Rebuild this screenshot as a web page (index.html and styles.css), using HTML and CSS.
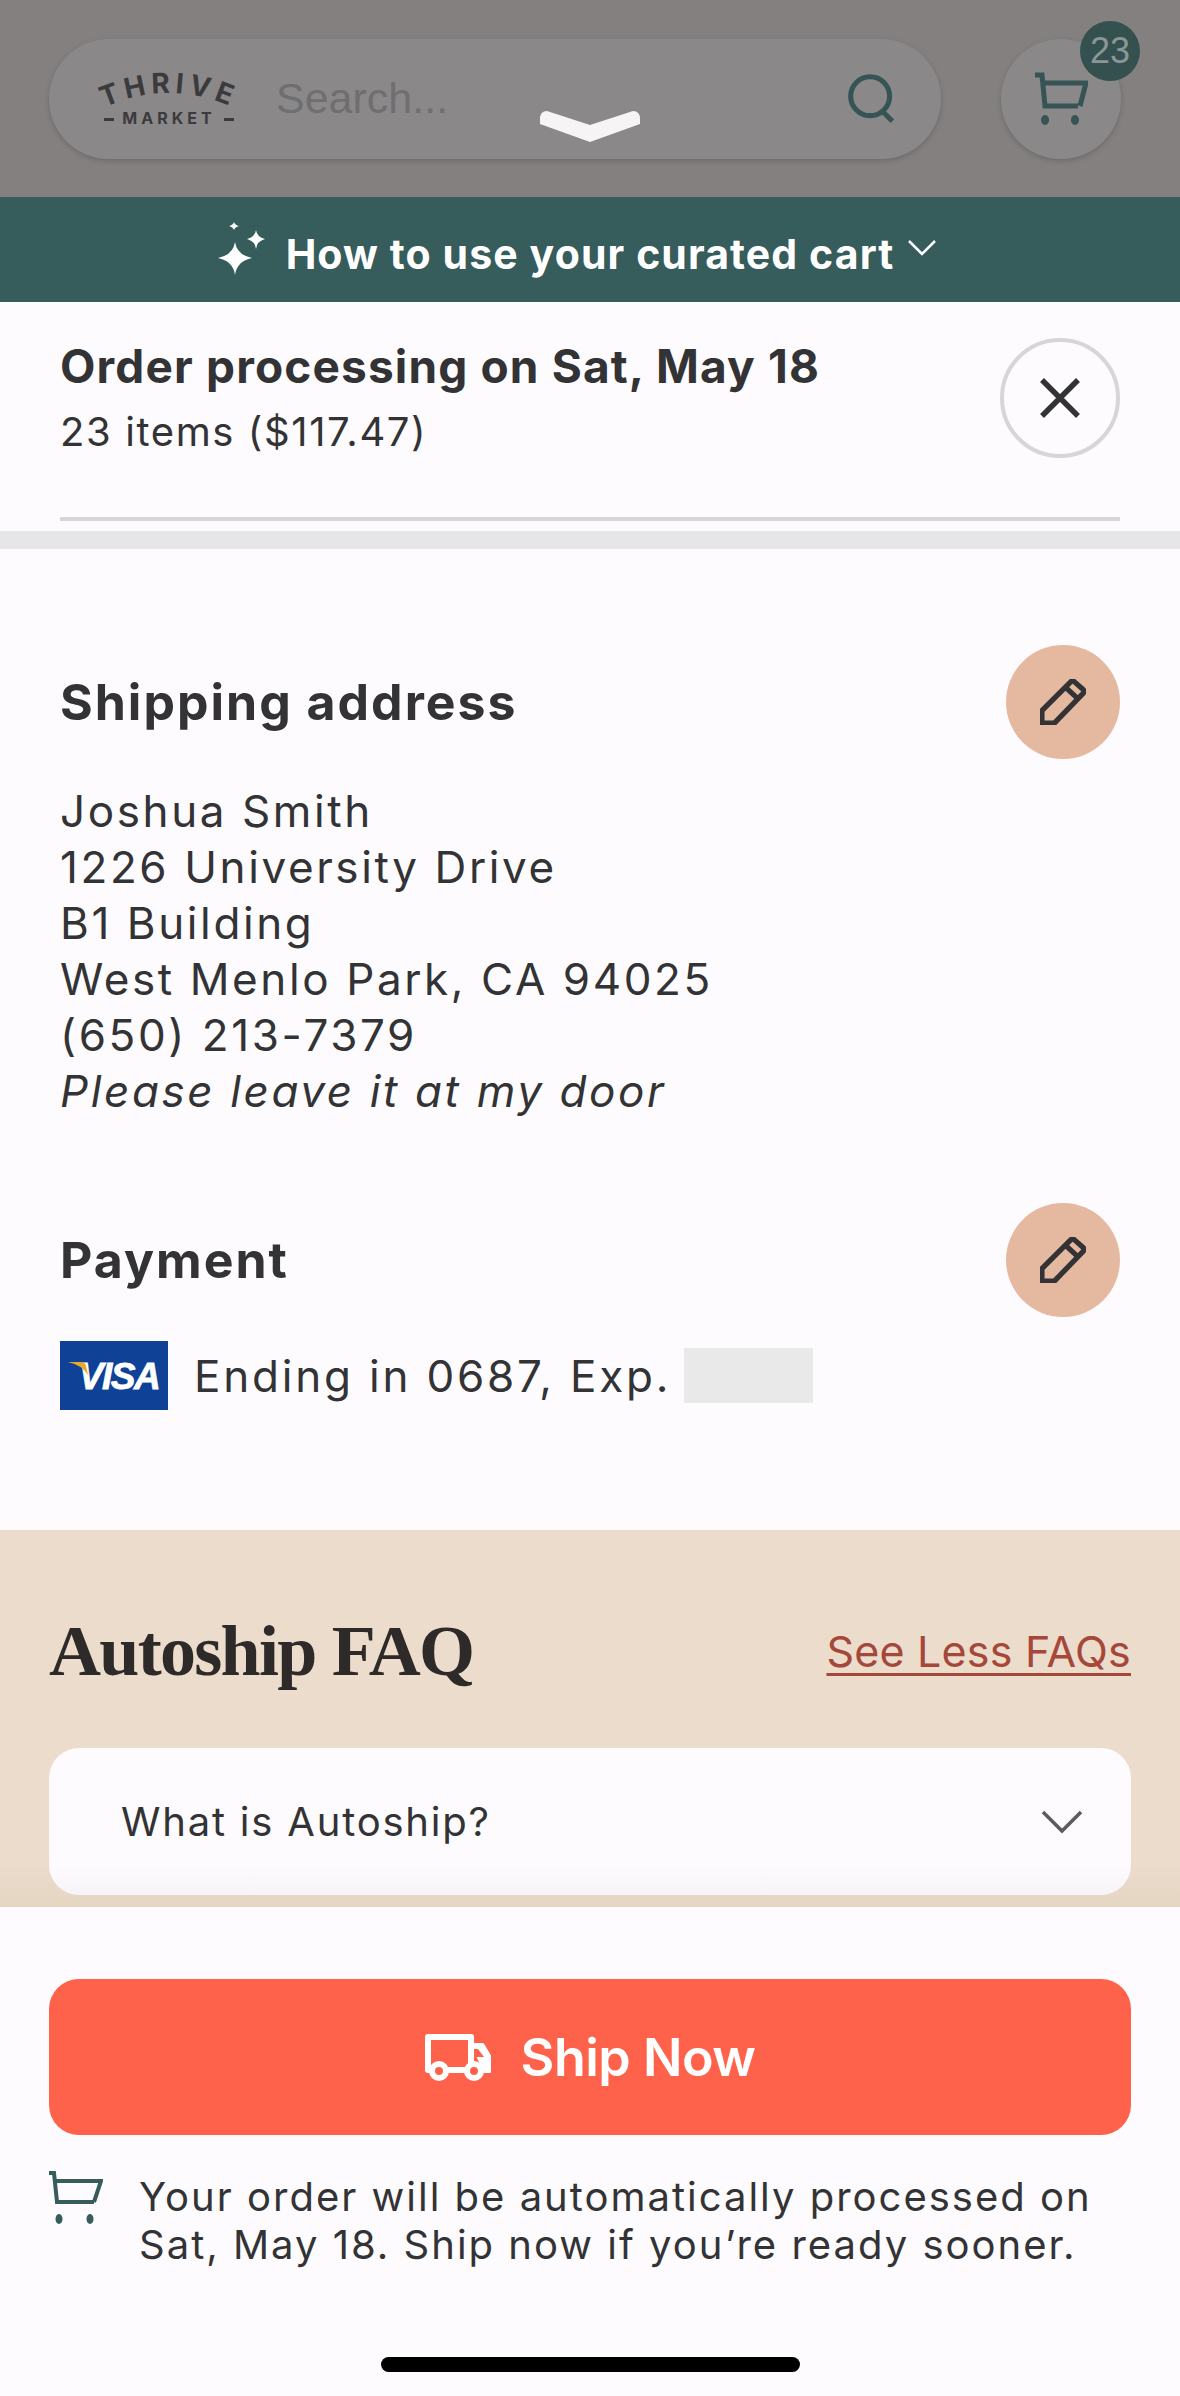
FILE: index.html
```html
<!DOCTYPE html>
<html lang="en">
<head>
  <meta charset="UTF-8" />
  <title>Review order</title>
  <link rel="stylesheet" href="styles.css">
</head>
<body>
  <div class="page">

    <!-- dimmed search header -->
    <div class="top-header">
      <div class="search-pill">
        <svg class="logo" viewBox="0 -10 140 76" width="140" height="76">
          <path id="logo-arc" d="M0 39 Q70 5 140 39" fill="none" />
          <text class="logo-top"><textPath href="#logo-arc" startOffset="50%" text-anchor="middle">THRIVE</textPath></text>
          <text class="logo-bottom" x="70" y="53" text-anchor="middle">MARKET</text>
          <path d="M5 48.500H15M125 48.500H135" stroke="#3b3a3d" stroke-width="3" />
        </svg>
        <span class="search-text">Search...</span>
        <svg class="search-icon" viewBox="0 0 54 54" width="50" height="50" fill="none" stroke="#365454" stroke-width="5.500">
          <circle cx="25" cy="24" r="21" />
          <path d="M38 40l11 11" />
        </svg>
      </div>
      <div class="cart-btn">
        <svg viewBox="0 0 54 54" width="54" height="54" fill="none" stroke="#365454" stroke-width="5">
          <path d="M1 3h7l3 31h33" />
          <path d="M9 11h43l-6 23" />
          <ellipse cx="11" cy="48" rx="4" ry="5" fill="#365454" stroke="none" />
          <ellipse cx="41" cy="48" rx="4" ry="5" fill="#365454" stroke="none" />
        </svg>
        <span class="badge">23</span>
      </div>
    </div>

    <!-- sheet handle -->
    <svg class="handle" viewBox="0 0 100 31" width="100" height="31">
      <path d="M7 0 L50 14 L93 0 Q100 0 100 8 L100 13 L50 31 L0 13 L0 8 Q0 0 7 0Z" fill="#f6f4f5" />
    </svg>

    <!-- curated cart banner -->
    <div class="banner">
      <svg class="sparkle" viewBox="0 0 47 53" width="47" height="53" fill="#fff">
        <path d="M17 20 Q19 33 34 36 Q19 39 17 53 Q15 39 0 36 Q15 33 17 20Z" />
        <path d="M38 8 Q39 15 47 17 Q39 19 38 27 Q37 19 29 17 Q37 15 38 8Z" />
        <path d="M16 0 Q17 3 21 4 Q17 5 16 8 Q15 5 11 4 Q15 3 16 0Z" />
      </svg>
      <span class="banner-text">How to use your curated cart</span>
      <svg class="banner-chev" viewBox="0 0 30 16" width="30" height="16" fill="none" stroke="#fff" stroke-width="2.500">
        <path d="M2 1l13 13L28 1" />
      </svg>
    </div>

    <!-- order summary -->
    <div class="order">
      <div class="order-row">
        <div>
          <div class="order-title">Order processing on Sat, May 18</div>
          <div class="order-sub">23 items ($117.47)</div>
        </div>
        <div class="close-btn">
          <svg viewBox="0 0 40 40" width="40" height="40" fill="none" stroke="#333336" stroke-width="5.500">
            <path d="M2 2l36 36M38 2L2 38" />
          </svg>
        </div>
      </div>
      <div class="order-line"></div>
    </div>
    <div class="gray-bar"></div>

    <!-- address + payment -->
    <div class="details">
      <div class="section-head address-head">
        <h2>Shipping address</h2>
        <div class="edit-btn">
          <svg viewBox="0 0 48 48" width="46" height="46" fill="none" stroke="#333336" stroke-width="5.500" stroke-linejoin="round">
            <path d="M2 46V33L32 3q2-2 4 0l9 8q2 2 0 4L15 46Z" />
            <path d="M27 9l13 12" />
          </svg>
        </div>
      </div>
      <div class="address">
        <div>Joshua Smith</div>
        <div>1226 University Drive</div>
        <div>B1 Building</div>
        <div>West Menlo Park, CA 94025</div>
        <div>(650) 213-7379</div>
        <div class="note">Please leave it at my door</div>
      </div>

      <div class="section-head payment-head">
        <h2>Payment</h2>
        <div class="edit-btn">
          <svg viewBox="0 0 48 48" width="46" height="46" fill="none" stroke="#333336" stroke-width="5.500" stroke-linejoin="round">
            <path d="M2 46V33L32 3q2-2 4 0l9 8q2 2 0 4L15 46Z" />
            <path d="M27 9l13 12" />
          </svg>
        </div>
      </div>
      <div class="payment-row">
        <svg class="visa" viewBox="0 0 108 69" width="108" height="69">
          <rect width="108" height="69" fill="#0f4296" />
          <text x="59" y="48" text-anchor="middle">VISA</text>
          <path d="M8 21h13q4 0 5 4l2 9Q22 24 8 21Z" fill="#e8a82c" />
        </svg>
        <span>Ending in 0687, Exp.</span>
        <span class="redacted"></span>
      </div>
    </div>

    <!-- faq -->
    <div class="faq">
      <div class="faq-head">
        <h2>Autoship FAQ</h2>
        <a class="faq-link">See Less FAQs</a>
      </div>
      <div class="faq-card">
        <span>What is Autoship?</span>
        <svg viewBox="0 0 42 24" width="42" height="24" fill="none" stroke="#5b5b5e" stroke-width="3.500">
          <path d="M2 2l19 19L40 2" />
        </svg>
      </div>
    </div>

    <!-- sticky footer -->
    <div class="footer">
      <div class="ship-btn">
        <svg viewBox="0 0 66 47" width="66" height="47" fill="none" stroke="#fff" stroke-width="6" stroke-linejoin="round">
          <path d="M6 36H3V3h43v33H22" />
          <path d="M46 12h11l7 12v12h-6" fill="#fff" />
          <path d="M49 15h4l6 8H49Z" fill="#ff624b" stroke="none" />
          <circle cx="14" cy="37" r="7" fill="#ff624b" />
          <circle cx="49" cy="37" r="7" fill="#ff624b" />
        </svg>
        <span>Ship Now</span>
      </div>
      <div class="auto-note">
        <svg viewBox="0 0 54 54" width="54" height="54" fill="none" stroke="#365c5c" stroke-width="4">
          <path d="M0 2h5l3 29h37" />
          <path d="M5 10h47l-7 21" />
          <ellipse cx="10" cy="48" rx="3.500" ry="5" fill="#365c5c" stroke="none" />
          <ellipse cx="41" cy="48" rx="3.500" ry="5" fill="#365c5c" stroke="none" />
        </svg>
        <p>Your order will be automatically processed on Sat, May 18. Ship now if you’re ready sooner.</p>
      </div>
      <div class="home-bar"></div>
    </div>

  </div>
</body>
</html>
```

FILE: styles.css
```css
body {
  margin: 0;
  font-family: Inter, 'Open Sans', sans-serif;
  background-color: #fdfbfd;
  color: #333336;
}

h2 {
  margin: 0;
}

.page {
  position: relative;
  width: 1180px;
  height: 2396px;
  overflow: hidden;
}

/* dimmed header */
.top-header {
  display: flex;
  align-items: center;
  justify-content: space-between;
  height: 197px;
  padding: 0 59px 0 49px;
  box-sizing: border-box;
  background: #848080;
}

.search-pill {
  display: flex;
  align-items: center;
  width: 892px;
  height: 120px;
  padding: 0 44px 0 50px;
  box-sizing: border-box;
  border-radius: 60px;
  background: #8a8889;
  box-shadow: 0 2px 5px rgba(60,55,55,0.3);
}

.logo {
  flex: none;
  overflow: visible;
}

.logo-top {
  font-family: Inter, sans-serif;
  font-size: 28px;
  font-weight: 700;
  letter-spacing: 5px;
  fill: #3b3a3d;
}

.logo-bottom {
  font-family: Inter, sans-serif;
  font-size: 16px;
  font-weight: 700;
  letter-spacing: 4px;
  fill: #3b3a3d;
}

.search-text {
  flex: 1;
  margin-left: 37px;
  font-family: 'Liberation Sans', sans-serif;
  font-size: 43px;
  color: #6f6e70;
}

.cart-btn {
  position: relative;
  display: flex;
  align-items: center;
  justify-content: center;
  width: 120px;
  height: 120px;
  border-radius: 50%;
  background: #8a8889;
  box-shadow: 0 2px 5px rgba(60,55,55,0.3);
}

.badge {
  position: absolute;
  top: -18px;
  right: -19px;
  width: 60px;
  height: 60px;
  border-radius: 50%;
  background: #34504f;
  color: #8a9796;
  font-family: 'Liberation Sans', sans-serif;
  font-size: 36px;
  line-height: 60px;
  text-align: center;
}

.handle {
  position: absolute;
  top: 111px;
  left: 540px;
}

/* banner */
.banner {
  display: flex;
  align-items: center;
  justify-content: center;
  height: 105px;
  padding-right: 25px;
  background: #365c5c;
  color: #fff;
}

.sparkle {
  margin-right: 21px;
  margin-top: -2px;
}

.banner-text {
  margin-top: 8px;
  font-size: 41px;
  font-weight: 700;
  letter-spacing: 1.100px;
}

.banner-chev {
  margin-left: 13px;
  margin-top: -4px;
}

/* order summary */
.order {
  height: 229px;
  padding: 36px 60px 0;
  box-sizing: border-box;
}

.order-row {
  display: flex;
  align-items: flex-start;
  justify-content: space-between;
  height: 179px;
}

.order-title {
  margin-top: -2px;
  font-size: 46px;
  font-weight: 700;
  letter-spacing: 1.150px;
  line-height: 60px;
}

.order-sub {
  margin-top: 11px;
  font-size: 40px;
  letter-spacing: 1.600px;
  line-height: 50px;
}

.close-btn {
  display: flex;
  align-items: center;
  justify-content: center;
  width: 120px;
  height: 120px;
  box-sizing: border-box;
  border: 4px solid #d6d6d7;
  border-radius: 50%;
}

.order-line {
  height: 4px;
  background: #d6d6d7;
}

.gray-bar {
  height: 18px;
  background: #e6e5e7;
}

/* address + payment */
.details {
  height: 981px;
  padding: 96px 60px 0;
  box-sizing: border-box;
}

.section-head {
  display: flex;
  align-items: center;
  justify-content: space-between;
  height: 114px;
}

.section-head h2 {
  font-size: 50px;
  font-weight: 700;
  letter-spacing: 2px;
}

.edit-btn {
  display: flex;
  align-items: center;
  justify-content: center;
  width: 114px;
  height: 114px;
  border-radius: 50%;
  background: #e5b8a0;
}

.address {
  margin-top: 24px;
  font-size: 44px;
  letter-spacing: 2.600px;
  line-height: 56px;
}

.note {
  font-style: italic;
}

.payment-head {
  margin-top: 84px;
}

.payment-row {
  display: flex;
  align-items: center;
  gap: 26px;
  margin-top: 24px;
  font-size: 44px;
  letter-spacing: 2.800px;
}

.visa {
  flex: none;
}

.visa text {
  font-family: 'Liberation Sans', sans-serif;
  font-size: 37px;
  font-weight: 700;
  font-style: italic;
  letter-spacing: -1.500px;
  fill: #fff;
  stroke: #fff;
  stroke-width: 0.800px;
}

.redacted {
  width: 129px;
  height: 55px;
  margin-left: -13px;
  background: #e9e9e9;
}

/* faq */
.faq {
  height: 377px;
  padding: 0 49px;
  box-sizing: border-box;
  background: linear-gradient(to bottom, #ecdccb 88%, #e5d5c3);
}

.faq-head {
  display: flex;
  align-items: center;
  justify-content: space-between;
  height: 218px;
  padding-top: 24px;
  box-sizing: border-box;
}

.faq-head h2 {
  font-family: 'Liberation Serif', serif;
  font-size: 72px;
  font-weight: 700;
  letter-spacing: -1.700px;
  color: #2f2a2a;
}

.faq-link {
  color: #a5483a;
  font-size: 43px;
  letter-spacing: 0.200px;
  text-decoration: underline;
  text-decoration-thickness: 3px;
  text-underline-offset: 6px;
}

.faq-card {
  display: flex;
  align-items: center;
  justify-content: space-between;
  height: 147px;
  padding: 0 48px 0 72px;
  box-sizing: border-box;
  border-radius: 30px;
  background: linear-gradient(to bottom, #fdfbfd 80%, #f6f4f8);
  font-size: 40px;
  letter-spacing: 1.800px;
}

/* footer */
.footer {
  height: 489px;
  padding: 72px 49px 0;
  box-sizing: border-box;
}

.ship-btn {
  display: flex;
  align-items: center;
  justify-content: center;
  gap: 30px;
  height: 156px;
  border-radius: 30px;
  background: #ff624b;
  color: #fff;
  font-size: 52px;
  font-weight: 600;
  letter-spacing: -0.500px;
}

.auto-note {
  display: flex;
  gap: 36px;
  margin-top: 36px;
}

.auto-note svg {
  flex: none;
}

.auto-note p {
  margin: 2px 0 0;
  font-size: 40px;
  letter-spacing: 2px;
  line-height: 48px;
}

.home-bar {
  width: 419px;
  height: 15px;
  margin: 88px auto 0;
  border-radius: 8px;
  background: #000;
}
```
